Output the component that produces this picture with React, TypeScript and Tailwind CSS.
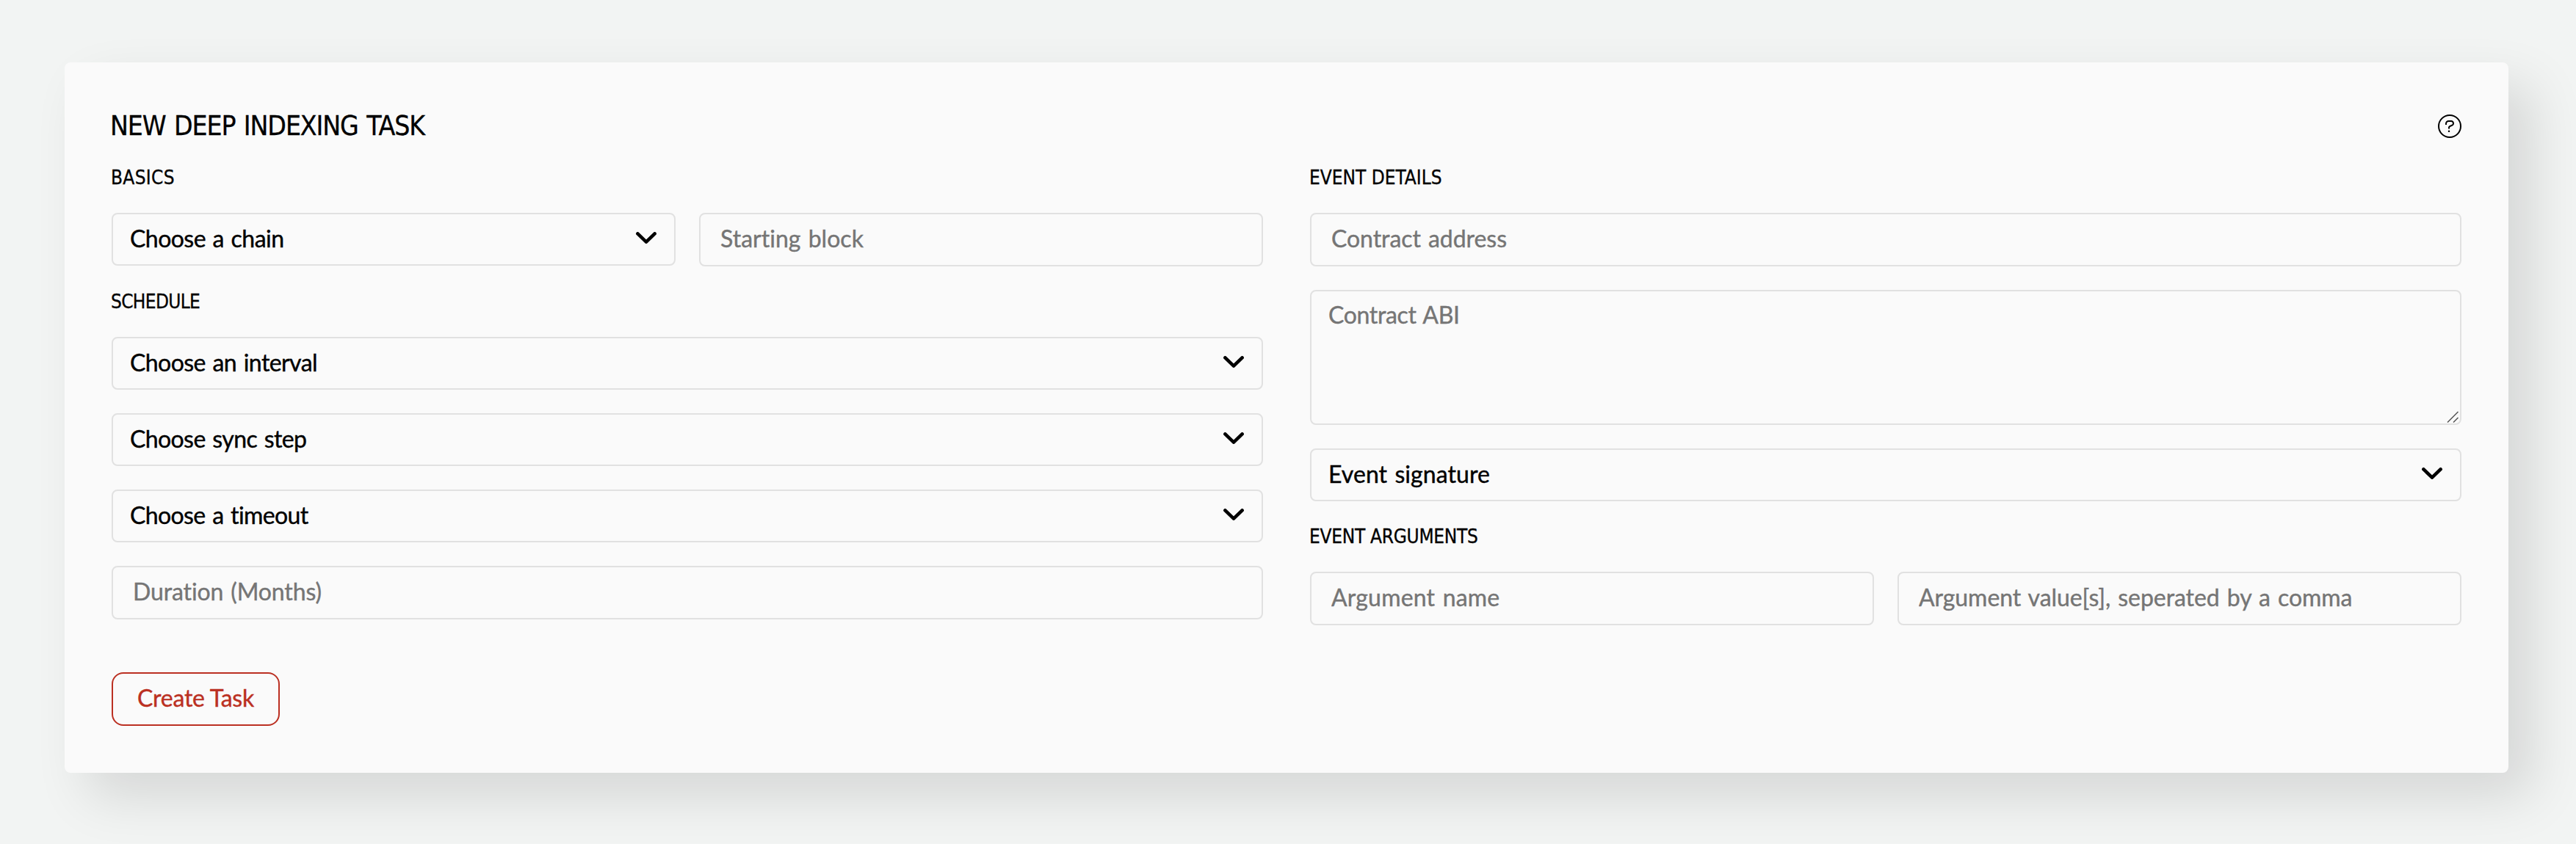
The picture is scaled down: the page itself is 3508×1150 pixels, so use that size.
import React from "react";

const control =
  "w-full rounded-lg border-2 border-[#e1e1e1] bg-transparent text-[32px] leading-[38px] font-['Lato',sans-serif] [word-spacing:2px] [-webkit-text-stroke:0.4px]";

function Select({ label, tracking }: { label: string; tracking: string }) {
  return (
    <button
      type="button"
      className={`${control} flex h-[72px] items-center justify-between pr-6 pb-[3px] pl-[23px] text-left text-black`}
    >
      <span className={tracking}>{label}</span>
      <svg className="mb-[1px] h-4 w-7" viewBox="0 0 28 16" fill="none" stroke="#000" strokeWidth="4.6" strokeLinecap="round" strokeLinejoin="round">
        <path d="M2.4 2.4 14 13.6 25.6 2.4" />
      </svg>
    </button>
  );
}

function Field({ placeholder, tracking }: { placeholder: string; tracking: string }) {
  return (
    <input
      className={`${control} h-[73px] px-[27px] pb-1 text-black outline-none placeholder:text-[#757575] ${tracking}`}
      placeholder={placeholder}
    />
  );
}

function Heading({ children, tracking }: { children: string; tracking: string }) {
  return (
    <h3 className={`-ml-px h-12 font-['DejaVu_Sans_Condensed','DejaVu_Sans',sans-serif] text-[26px] leading-[36px] font-normal whitespace-nowrap text-black [-webkit-text-stroke:0.3px] ${tracking}`}>
      {children}
    </h3>
  );
}

function HelpIcon() {
  return (
    <svg className="h-8 w-8" viewBox="0 0 32 32" fill="none" stroke="#000" strokeWidth="2">
      <circle cx="16" cy="16" r="15" />
      <path d="M11 14v-1.5A3.5 3.5 0 0 1 14.5 9H18a3 3 0 0 1 3 3.2c0 1.7-1.2 2.4-3 3s-3 1.300-3 2.900v1.500" />
      <path d="M15 21.700v2.300" strokeWidth="2.200" />
    </svg>
  );
}

export default function App() {
  return (
    <main className="h-[1150px] w-[3508px] overflow-hidden bg-[#f2f4f3] pt-[85px] pl-[88px]">
      <section className="h-[968px] w-[3328px] rounded-lg bg-[#fafafa] px-16 pt-[71px] shadow-[32px_32px_72px_rgba(0,0,0,0.12)]">
        <header className="flex h-8 items-center justify-between">
          <h2 className="-ml-[2px] font-['DejaVu_Sans_Condensed','DejaVu_Sans',sans-serif] text-[37px] leading-8 font-normal tracking-[-1.100px] whitespace-nowrap text-black [word-spacing:2px] [-webkit-text-stroke:0.3px]">
            NEW DEEP INDEXING TASK
          </h2>
          <HelpIcon />
        </header>

        <div className="mt-9 grid grid-cols-2 gap-x-16">
          <div className="flex flex-col">
            <Heading tracking="tracking-[0.3px]">BASICS</Heading>
            <div className="mt-[18px] grid grid-cols-2 items-start gap-8">
              <Select label="Choose a chain" tracking="tracking-[-0.550px]" />
              <Field placeholder="Starting block" tracking="tracking-[0.02px]" />
            </div>
            <div className="mt-[30px] flex flex-col">
              <Heading tracking="tracking-[-0.670px]">SCHEDULE</Heading>
            </div>
            <div className="mt-[18px] flex flex-col gap-8">
              <Select label="Choose an interval" tracking="tracking-[-0.570px]" />
              <Select label="Choose sync step" tracking="tracking-[-0.600px]" />
              <Select label="Choose a timeout" tracking="tracking-[-0.610px]" />
              <Field placeholder="Duration (Months)" tracking="tracking-[-0.12px]" />
            </div>
          </div>

          <div className="flex flex-col">
            <Heading tracking="tracking-[0px]">EVENT DETAILS</Heading>
            <div className="mt-[18px] flex flex-col gap-8">
              <Field placeholder="Contract address" tracking="tracking-[-0.06px]" />
              <div className="relative h-[184px]">
                <textarea
                  className={`${control} block h-[184px] resize-none px-[23px] pt-[13px] tracking-[-0.35px] text-black outline-none placeholder:text-[#757575]`}
                  placeholder="Contract ABI"
                />
                <svg className="absolute right-1 bottom-[3px] h-4 w-4" viewBox="0 0 16 16" fill="none" stroke="#555" strokeWidth="1.500">
                  <path d="M1 15.500 15.500 1M9 15.500 15.500 9" />
                </svg>
              </div>
              <Select label="Event signature" tracking="tracking-[0.07px]" />
            </div>
            <div className="mt-[30px]">
              <Heading tracking="tracking-[-0.280px]">EVENT ARGUMENTS</Heading>
            </div>
            <div className="mt-[18px] grid grid-cols-2 gap-8">
              <Field placeholder="Argument name" tracking="tracking-[0.2px]" />
              <Field placeholder="Argument value[s], seperated by a comma" tracking="tracking-[-0.06px]" />
            </div>
          </div>
        </div>

        <button
          type="button"
          className="mt-16 flex h-[73px] w-[229px] items-center justify-center rounded-2xl border-2 border-[#bb3022] pb-[3px] font-['Lato',sans-serif] text-[32px] leading-[38px] tracking-[-0.24px] text-[#bb3022] [-webkit-text-stroke:0.4px]"
        >
          Create Task
        </button>
      </section>
    </main>
  );
}
